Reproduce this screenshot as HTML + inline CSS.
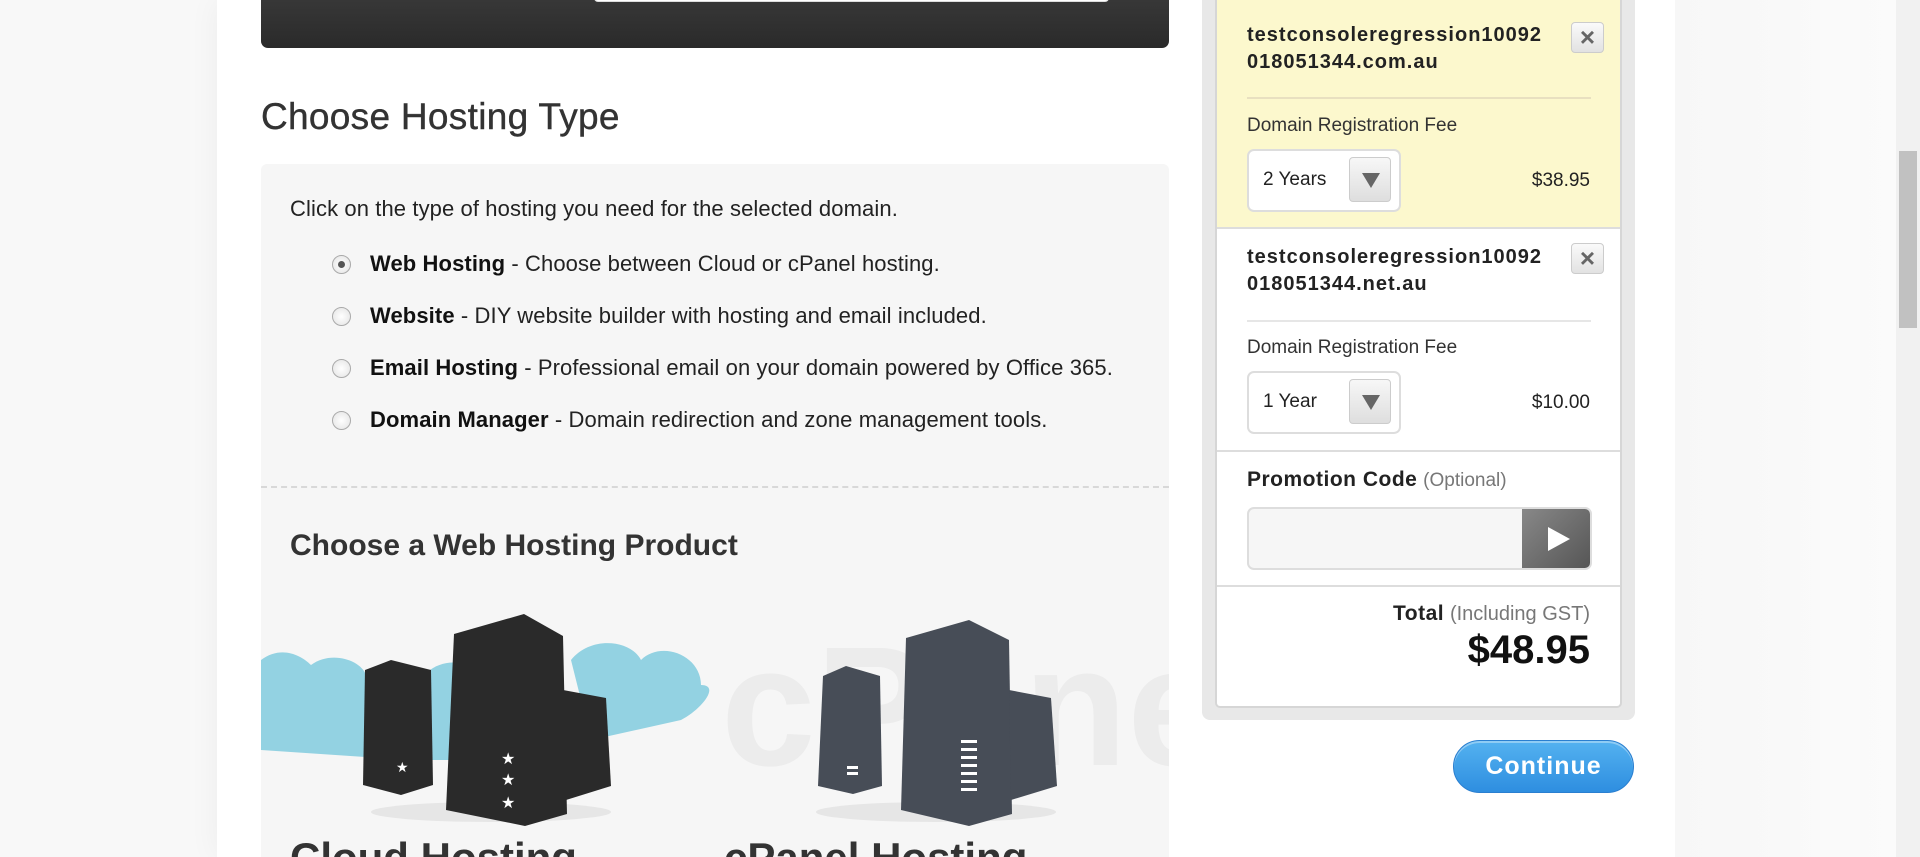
<!DOCTYPE html>
<html><head><meta charset="utf-8">
<style>
*{margin:0;padding:0;box-sizing:border-box}
html{width:1920px;height:857px;overflow:hidden}
body{width:1920px;height:857px;overflow:hidden;background:#f8f8f8;font-family:"Liberation Sans",Arial,sans-serif;position:relative;color:#222}
.page{position:absolute;left:217px;top:0;width:1458px;height:857px;background:#fff;box-shadow:0 0 30px rgba(0,0,0,.05)}
.right-bg{position:absolute;left:1675px;top:0;width:221px;height:857px;background:linear-gradient(90deg,#f7f7f7,#fbfbfb)}
.scroll{position:absolute;left:1896px;top:0;width:24px;height:857px;background:#f1f1f1}
.scroll .th{position:absolute;left:3px;top:151px;width:18px;height:177px;background:#c1c1c1}
.abs{position:absolute}
.dark{left:261px;top:-10px;width:908px;height:58px;background:linear-gradient(#3a3a3a,#2a2a2a);border-radius:0 0 7px 7px}
.dark .bar{position:absolute;left:333px;top:0;width:515px;height:12px;border:1px solid #ddd;border-top:none;background:#fff;border-radius:0 0 4px 4px}
h1{position:absolute;left:261px;top:96px;font-size:37px;font-weight:normal;color:#333;letter-spacing:.3px;-webkit-text-stroke:.4px #333}
.panel{left:261px;top:164px;width:908px;height:693px;background:#f6f6f6;border-radius:6px 6px 0 0}
.intro{left:290px;top:196px;font-size:22px;color:#222;letter-spacing:.1px}
.opt{position:absolute;left:370px;font-size:22px;color:#222;white-space:nowrap;letter-spacing:.1px}
.opt b{color:#111}
.radio{position:absolute;left:332px;width:19px;height:19px;border-radius:50%;border:1px solid #aaa;background:radial-gradient(#fff,#e2e2e2)}
.radio.on::after{content:"";position:absolute;left:5px;top:5px;width:7px;height:7px;border-radius:50%;background:#555}
.dash{left:261px;top:486px;width:908px;border-top:2px dashed #d8d8d8}
h2{position:absolute;left:290px;top:529px;font-size:30px;color:#333}
.cloudh{left:290px;top:834px;font-size:42px;font-weight:bold;color:#333;white-space:nowrap}
.cart-out{left:1202px;top:-10px;width:433px;height:730px;background:#e8e8e8;border-radius:0 0 8px 8px}
.cart{left:1215px;top:-10px;width:407px;height:718px;background:#fff;border:2px solid #d6d6d6;border-top:none;border-radius:0 0 5px 5px;overflow:hidden}
.yel{position:absolute;left:0;top:0;width:100%;height:239px;background:#fcf8cd;border-bottom:2px solid #ddd;border-top:2px solid #ddd}
.dom{position:absolute;left:30px;font-size:20px;font-weight:bold;color:#222;line-height:27px;letter-spacing:1px}
.x{position:absolute;left:354px;width:33px;height:31px;border:1px solid #ccc;border-radius:4px;background:linear-gradient(#fafafa,#e2e2e2);color:#666;font-size:26px;font-weight:bold;text-align:center;line-height:29px}
.line{position:absolute;left:30px;width:344px;border-top:2px solid #e8e0c0}
.fee{position:absolute;left:30px;font-size:19px;color:#333}
.sel{position:absolute;left:30px;width:154px;height:63px;border:2px solid #ddd;border-radius:7px;background:#fff;font-size:19px;color:#222;padding:18px 0 0 14px}
.sel .ar{position:absolute;right:8px;top:6px;width:42px;height:45px;border:1px solid #ccc;border-radius:4px;background:linear-gradient(#f7f7f7,#dedede)}
.sel .ar::after{content:"";position:absolute;left:12px;top:15px;border-left:9px solid transparent;border-right:9px solid transparent;border-top:15px solid #666}
.price{position:absolute;right:30px;font-size:19px;color:#222}
.hr{position:absolute;left:0;width:100%;border-top:2px solid #ddd}
.continue{left:1453px;top:740px;width:181px;height:53px;border-radius:27px;background:linear-gradient(#54b2f0,#2e8ee0);border:1px solid #2a7fd0;color:#fff;font-size:25px;font-weight:bold;text-align:center;line-height:50px;letter-spacing:1px;box-shadow:inset 0 2px 0 rgba(255,255,255,.35)}
</style></head><body>
<div class="page"></div>
<div class="right-bg"></div>
<div class="scroll"><div class="th"></div></div>

<div class="abs dark"><div class="bar"></div></div>
<h1>Choose Hosting Type</h1>
<div class="abs panel"></div>
<div class="abs intro">Click on the type of hosting you need for the selected domain.</div>
<div class="radio on" style="top:255px"></div><div class="opt" style="top:251px"><b>Web Hosting</b> - Choose between Cloud or cPanel hosting.</div>
<div class="radio" style="top:307px"></div><div class="opt" style="top:303px"><b>Website</b> - DIY website builder with hosting and email included.</div>
<div class="radio" style="top:359px"></div><div class="opt" style="top:355px"><b>Email Hosting</b> - Professional email on your domain powered by Office 365.</div>
<div class="radio" style="top:411px"></div><div class="opt" style="top:407px"><b>Domain Manager</b> - Domain redirection and zone management tools.</div>
<div class="abs dash"></div>
<h2>Choose a Web Hosting Product</h2>

<svg class="abs" style="left:261px;top:600px" width="908" height="230" viewBox="0 0 908 230">
 <g fill="#93d2e2">
  <path d="M0 150 L0 60 C20 45 40 55 50 65 C70 50 100 60 105 75 C120 70 140 80 140 95 L150 160 Z"/>
  <path d="M150 100 C160 60 200 50 230 80 L230 160 L150 160Z"/>
  <path d="M310 60 C330 35 370 40 380 60 C400 40 440 55 440 85 C460 85 440 110 420 120 L330 140 Z"/>
 </g>
 <text x="460" y="165" font-family="Liberation Sans" font-weight="bold" font-size="170" fill="#ececec">cPanel</text>
 <ellipse cx="230" cy="212" rx="120" ry="10" fill="#e6e6e6"/>
 <ellipse cx="675" cy="212" rx="120" ry="10" fill="#e6e6e6"/>
 <g fill="#2a2a2a">
  <path d="M104 70 L130 60 L170 70 L172 185 L140 195 L102 185Z"/>
  <path d="M193 34 L263 14 L302 36 L306 214 L264 226 L185 210Z"/>
  <path d="M302 90 L345 98 L350 186 L305 200Z"/>
 </g>
 <g fill="#fff"><text x="135" y="172" font-size="14">★</text><text x="240" y="164" font-size="16">★</text><text x="240" y="185" font-size="16">★</text><text x="240" y="208" font-size="16">★</text></g>
 <g fill="#474d57">
  <path d="M562 76 L585 66 L619 76 L621 186 L592 194 L557 186Z"/>
  <path d="M645 38 L708 20 L748 40 L751 214 L708 226 L640 210Z"/>
  <path d="M748 90 L790 98 L796 186 L750 200Z"/>
 </g>
 <g fill="#fff"><rect x="586" y="166" width="11" height="3"/><rect x="586" y="172" width="11" height="3"/>
 <rect x="700" y="140" width="16" height="3"/><rect x="700" y="148" width="16" height="3"/><rect x="700" y="156" width="16" height="3"/><rect x="700" y="164" width="16" height="3"/><rect x="700" y="172" width="16" height="3"/><rect x="700" y="180" width="16" height="3"/><rect x="700" y="188" width="16" height="3"/></g>
</svg>
<div class="abs cloudh">Cloud Hosting<span style="position:absolute;left:434px">cPanel Hosting</span></div>

<div class="abs cart-out"></div>
<div class="abs cart">
 <div class="yel"></div>
 <div class="dom" style="top:32px">testconsoleregression10092<br>018051344.com.au</div>
 <div class="x" style="top:32px">×</div>
 <div class="line" style="top:107px"></div>
 <div class="fee" style="top:125px">Domain Registration Fee</div>
 <div class="sel" style="top:159px">2 Years<div class="ar"></div></div>
 <div class="price" style="top:180px">$38.95</div>
 <div class="dom" style="top:254px">testconsoleregression10092<br>018051344.net.au</div>
 <div class="x" style="top:253px">×</div>
 <div class="line" style="top:330px;border-color:#e6e6e6"></div>
 <div class="fee" style="top:347px">Domain Registration Fee</div>
 <div class="sel" style="top:381px">1 Year<div class="ar"></div></div>
 <div class="price" style="top:402px">$10.00</div>
 <div class="hr" style="top:460px"></div>
 <div class="fee" style="top:478px;font-size:21px"><b style="color:#222;letter-spacing:.5px">Promotion Code</b> <span style="color:#777;font-size:19px">(Optional)</span></div>
 <div class="abs" style="left:30px;top:517px;width:345px;height:63px;border:2px solid #ddd;border-radius:7px;background:#f6f6f6;overflow:hidden">
  <div style="position:absolute;right:0;top:0;width:68px;height:61px;background:linear-gradient(135deg,#888,#555)"></div>
  <div style="position:absolute;right:20px;top:18px;border-top:12px solid transparent;border-bottom:12px solid transparent;border-left:22px solid #fff"></div>
 </div>
 <div class="hr" style="top:595px"></div>
 <div class="price" style="top:612px;font-size:21px"><b style="letter-spacing:.5px">Total</b> <span style="color:#777;font-size:20px">(Including GST)</span></div>
 <div class="price" style="top:638px;font-size:40px;font-weight:bold;color:#111">$48.95</div>
</div>
<div class="abs continue">Continue</div>
</body></html>
